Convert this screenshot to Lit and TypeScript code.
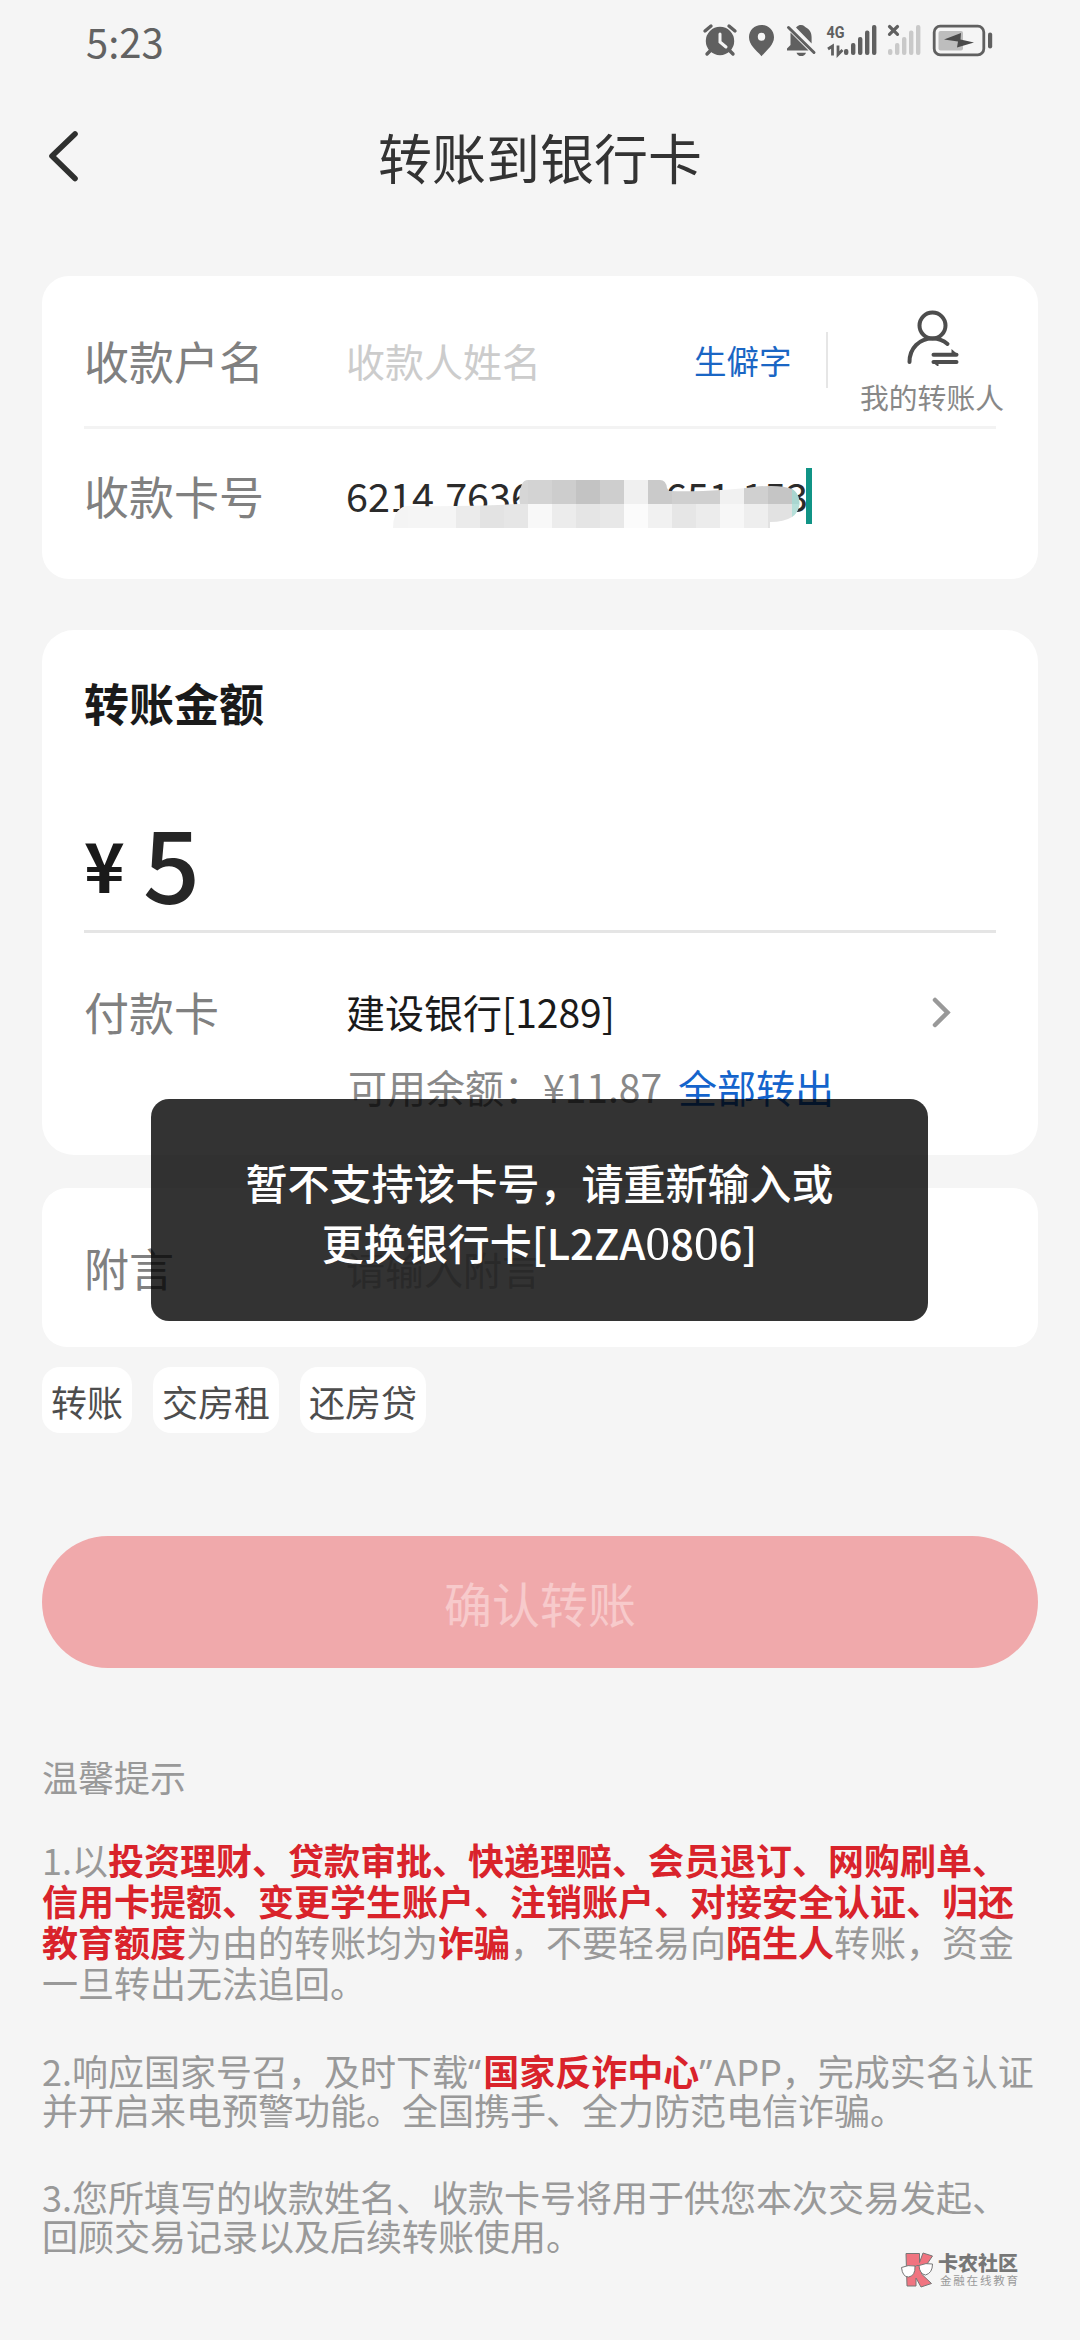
import { LitElement, html, svg, css } from "lit";
import { customElement, property } from "lit/decorators.js";

const CELL = 24;
const TOP_CELLS = ["#d6d6d6", "#d3d3d3", "#cdcdcd", "#c3c3c3", "#cecece", "#f0f0f0", "#cacaca", "#cfcfcf", "#cfcfcf", "#f1f1f1", "#d0d0d0", "#c5c5c5", "#a9d6d0"];
const BOTTOM_CELLS = ["#f4f4f4", "#f5f5f5", "#f5f5f5", "#ebebeb", "#e3e3e3", "#e6e6e6", "#f8f8f8", "#ececec", "#e5e5e5", "#e8e8e8", "#fbfbfb", "#f1f1f1", "#e6e6e6", "#ececec", "#f7f7f7", "#eeeeee", "#e2e2e2", "#b6dfd9"];

@customElement("status-bar")
class StatusBar extends LitElement {
  static styles = css`
    :host { display: flex; height: 82px; align-items: center; padding: 0 82px 0 86px; justify-content: space-between; }
    .time { font-size: 40px; line-height: 40px; color: #626262; }
    .icons { width: 300px; height: 82px; display: block; }
    .net { font: 700 17px "Roboto", "Liberation Sans", sans-serif; }
  `;
  render() {
    const bars = [6, 12, 18, 24.5, 30];
    return html`
      <span class="time">5:23</span>
      <svg class="icons" viewBox="698 0 300 82" fill="#606060">
        <circle cx="720" cy="41" r="14.2" />
        <path d="M705 31l6-5M735 31l-6-5M710 51l-3 3M730 51l3 3" stroke="#606060" stroke-width="3.4" stroke-linecap="round" />
        <path d="M720 34v8l6 5" fill="none" stroke="#f5f5f5" stroke-width="3" stroke-linecap="round" />
        <path fill-rule="evenodd" d="M761.500 25c-7.200 0-12.500 5.400-12.500 12.300 0 7.500 7 12.700 12.500 18.900 5.500-6.200 12.500-11.400 12.500-18.900C774 30.400 768.700 25 761.500 25zm0 7.800a3.700 4 0 1 1 0 8 3.700 4 0 1 1 0-8z" />
        <path d="M790.500 32.500L808.500 50.500h-21.500v-2l3.500-3.500zM796 27.500c1-.6 1.800-2.500 5-2.500 3 0 3.800 1.800 4.600 2.300 4.700 2.200 6 6.200 6 10.200v6zM796.500 52.700h9.500c-.8 2.200-2.500 3.400-4.700 3.400-2.300 0-4-1.200-4.800-3.400z" />
        <path d="M788.500 27.500l25.500 25" stroke="#606060" stroke-width="3" stroke-linecap="round" />
        <text class="net" x="826.500" y="38.300" textLength="18" lengthAdjust="spacingAndGlyphs">4G</text>
        <path d="M828 49l4.500-3v9.500M838 45.500v9l4.500-4.500" fill="none" stroke="#606060" stroke-width="2.800" />
        ${bars.map((h, i) => svg`<rect x=${844 + i * 7} y=${55 - h} width="4.400" height=${h} rx="2" />`)}
        <path d="M889.500 26.500l8 7.800M897.500 26.500l-8 7.800" stroke="#606060" stroke-width="3.200" stroke-linecap="round" />
        ${bars.map((h, i) => svg`<rect x=${888 + i * 7} y=${55 - h} width="4.400" height=${h} rx="2" fill="#c9c9c9" />`)}
        <rect x="934.200" y="26.200" width="49.600" height="28.600" rx="6" fill="none" stroke="#606060" stroke-width="2.800" />
        <rect x="938.500" y="31" width="24.500" height="19.500" rx="2" fill="#bdbdbd" />
        <path d="M944 39.500l17-6.500-.5 6.500 13.500 3-17 5 1-6z" fill="#4a4a4a" />
        <rect x="988" y="32.500" width="4.200" height="16" rx="2.100" />
      </svg>
    `;
  }
}

@customElement("account-card")
class AccountCard extends LitElement {
  static styles = css`
    :host { display: block; height: 303px; box-sizing: border-box; background: #fff; border-radius: 27px; padding: 0 42px; }
    .row { display: flex; align-items: center; box-sizing: border-box; }
    .name { height: 150px; padding-top: 18px; }
    .number { height: 132px; }
    .line { height: 3px; background: #f3f3f3; }
    .label { width: 262px; padding-top: 2px; font-size: 45px; line-height: 60px; color: #808080; flex: none; }
    .hint { width: 348px; font-size: 39px; line-height: 60px; color: #ccc; }
    .rare { font-size: 32.5px; line-height: 40px; color: #1a66c4; width: 132px; }
    .bar { width: 2px; height: 56px; background: #e6e6e6; }
    .contact { align-self: flex-start; padding-top: 16px; margin: 0 -12px 0 32px; display: flex; flex-direction: column; align-items: center; gap: 16px; font-size: 28.8px; line-height: 30px; color: #888; white-space: nowrap; }
    .person { width: 54px; height: 56px; display: block; }
    .value { position: relative; display: flex; align-items: center; width: 470px; height: 60px; font-size: 39.6px; line-height: 60px; color: #2b2b2b; word-spacing: 2.400px; white-space: pre; }
    .tail { margin-left: auto; margin-right: 8px; }
    .mosaic { position: absolute; left: 46px; top: 15px; width: 412px; height: 52px; }
    .caret { position: absolute; left: 460px; top: 3px; width: 6px; height: 56px; background: #109486; }
  `;
  render() {
    return html`
      <div class="row name">
        <span class="label">收款户名</span>
        <span class="hint">收款人姓名</span>
        <span class="rare">生僻字</span>
        <span class="bar"></span>
        <div class="contact">
          <svg class="person" viewBox="905.500 310 54 56" fill="none" stroke="#4d4d4d" stroke-width="4" stroke-linecap="round">
            <circle cx="933" cy="325.500" r="13" />
            <path d="M910 362c0-14 10-23.500 23-23.500 6 0 11 2 15 5.500" />
            <path d="M934 354.800h23M934 362h23" />
            <path d="M952 349l7 6h-7zM939 367l-7-5.500h7z" fill="#4d4d4d" stroke="none" />
          </svg>
          <span>我的转账人</span>
        </div>
      </div>
      <div class="line"></div>
      <div class="row number">
        <span class="label">收款卡号</span>
        <div class="value">
          <span>6214 7636</span><span class="tail">651 153</span>
          <svg class="mosaic" viewBox="392 480 412 52">
            <clipPath id="brush">
              <path d="M528 480H660q6 0 7 8l2 3c30 1 60-1 85-4q26-3 38 2c10 5 10 22 0 28q-8 5-22 5v6H393q0-20 14-22 60 1 113-2-2-12 2-20 2-4 6-4z" />
            </clipPath>
            <g clip-path="url(#brush)">
              ${TOP_CELLS.map((c, i) => svg`<rect x=${504 + i * CELL} y="480" width="24.500" height="24.500" fill=${c} />`)}
              ${BOTTOM_CELLS.map((c, i) => svg`<rect x=${384 + i * CELL} y="504" width="24.500" height="24" fill=${c} />`)}
            </g>
          </svg>
          <span class="caret"></span>
        </div>
      </div>
    `;
  }
}

@customElement("amount-card")
class AmountCard extends LitElement {
  static styles = css`
    :host { display: block; height: 525px; box-sizing: border-box; background: #fff; border-radius: 32px; padding: 43px 42px 0; }
    .title { font-size: 45px; line-height: 60px; font-weight: 700; color: #1a1a1a; }
    .amount { display: flex; align-items: center; box-sizing: border-box; height: 197px; padding-top: 58px; line-height: 100px; }
    .yen { font-size: 69px; font-weight: 700; color: #1a1a1a; margin-top: 5px; width: 59px; }
    .sum { font-size: 100px; font-weight: 500; color: #262626; }
    .line { height: 3px; background: #e5e5e5; }
    .pay { display: flex; align-items: center; margin-top: 48px; height: 60px; line-height: 60px; }
    .label { width: 262px; padding-top: 2px; font-size: 45px; color: #808080; }
    .bank { font-size: 39px; color: #1a1a1a; flex: 1; }
    .arrow { width: 20px; height: 32px; margin: 2px 44px 0 0; display: block; }
    .balance { margin: 15px 0 0 264px; font-size: 39px; line-height: 60px; color: #888; display: flex; gap: 16px; white-space: nowrap; }
    .all { color: #1464cc; }
  `;
  render() {
    return html`
      <div class="title">转账金额</div>
      <div class="amount"><span class="yen">¥</span><span class="sum">5</span></div>
      <div class="line"></div>
      <div class="pay">
        <span class="label">付款卡</span><span class="bank">建设银行[1289]</span>
        <svg class="arrow" viewBox="0 0 20 32" fill="none" stroke="#999" stroke-width="4.500" stroke-linecap="round"><path d="M3 4l12.500 12.500L3 29" /></svg>
      </div>
      <div class="balance"><span>可用余额：¥11.87</span><span class="all">全部转出</span></div>
    `;
  }
}

@customElement("safety-tips")
class SafetyTips extends LitElement {
  static styles = css`
    :host { display: block; font-size: 36px; color: #999; white-space: nowrap; }
    .head { line-height: 40px; }
    .tip { line-height: 41px; margin-top: 42.5px; }
    .tight { line-height: 39px; margin-top: 48px; }
    .hot { color: #d9232b; font-weight: 700; }
    .q { font-family: "Noto Sans", sans-serif; line-height: 0; letter-spacing: 2.2px; }
  `;
  render() {
    return html`
      <div class="head">温馨提示</div>
      <div class="tip">
        <div>1.以<b class="hot">投资理财、贷款审批、快递理赔、会员退订、网购刷单、</b></div>
        <div><b class="hot">信用卡提额、变更学生账户、注销账户、对接安全认证、归还</b></div>
        <div><b class="hot">教育额度</b>为由的转账均为<b class="hot">诈骗</b>，不要轻易向<b class="hot">陌生人</b>转账，资金</div>
        <div>一旦转出无法追回。</div>
      </div>
      <div class="tip tight">
        <div>2.响应国家号召，及时下载<span class="q">“</span><b class="hot">国家反诈中心</b><span class="q">”</span>APP，完成实名认证</div>
        <div>并开启来电预警功能。全国携手、全力防范电信诈骗。</div>
      </div>
      <div class="tip tight">
        <div>3.您所填写的收款姓名、收款卡号将用于供您本次交易发起、</div>
        <div>回顾交易记录以及后续转账使用。</div>
      </div>
    `;
  }
}

@customElement("app-root")
class AppRoot extends LitElement {
  @property({ attribute: false }) chips = ["转账", "交房租", "还房贷"];
  static styles = css`
    :host { display: block; position: relative; width: 1080px; height: 2340px; overflow: hidden; background: #f5f5f5; font-family: "Noto Sans CJK SC", sans-serif; }
    .nav { display: grid; grid-template-columns: 120px 1fr 120px; align-items: center; height: 146px; }
    .back { width: 40px; height: 60px; margin: 2px 0 0 44px; display: block; }
    .title { text-align: center; font-size: 54px; line-height: 70px; padding-top: 3px; color: #333; }
    .body { padding: 48px 42px 0; display: flex; flex-direction: column; }
    .amount { margin-top: 51px; }
    .memo { margin-top: 33px; height: 159px; box-sizing: border-box; padding: 0 42px; border-radius: 25px; background: #fff; display: flex; align-items: center; }
    .label { width: 262px; font-size: 45px; line-height: 60px; color: #808080; }
    .hint { font-size: 39px; line-height: 60px; color: #ccc; }
    .chips { display: flex; gap: 21px; margin-top: 20px; }
    .chip { height: 66px; line-height: 68px; padding: 0 9px; border-radius: 18px; background: #fff; font-size: 36px; color: #4d4d4d; }
    .submit { margin-top: 103px; height: 132px; border: 0; border-radius: 66px; background: #f0a9ab; color: #f7cacb; font-family: inherit; font-size: 48px; line-height: 132px; padding: 0; }
    .tips { margin-top: 88px; }
    .toast { position: absolute; left: 151px; top: 1099px; width: 777px; height: 222px; box-sizing: border-box; padding-top: 53px; border-radius: 18px; background: rgba(0, 0, 0, 0.8); color: #fff; font-size: 42px; font-weight: 500; line-height: 60px; text-align: center; white-space: nowrap; }
    .zero { font-family: "Liberation Serif", serif; font-size: 49px; font-weight: 400; line-height: 40px; }
    .mark { position: absolute; left: 900px; top: 2252px; display: flex; gap: 3px; }
    .logo { width: 35px; height: 36px; display: block; }
    .brand { font-size: 20px; font-weight: 900; line-height: 21px; color: #777; white-space: nowrap; }
    .motto { font-size: 11.5px; line-height: 15px; letter-spacing: 1.800px; color: #999; padding-left: 2px; white-space: nowrap; }
  `;
  render() {
    return html`
      <status-bar></status-bar>
      <div class="nav">
        <svg class="back" viewBox="44 126 40 60" fill="none" stroke="#2f302f" stroke-width="5.600" stroke-linecap="round" stroke-linejoin="round"><path d="M75 134L52 156l23 22.500" /></svg>
        <div class="title">转账到银行卡</div>
      </div>
      <div class="body">
        <account-card></account-card>
        <amount-card class="amount"></amount-card>
        <div class="memo"><span class="label">附言</span><span class="hint">请输入附言</span></div>
        <div class="chips">${this.chips.map((c) => html`<span class="chip">${c}</span>`)}</div>
        <button class="submit">确认转账</button>
        <safety-tips class="tips"></safety-tips>
      </div>
      <div class="toast">
        <div>暂不支持该卡号，请重新输入或</div>
        <div>更换银行卡[L2ZA<span class="zero">0</span>8<span class="zero">0</span>6]</div>
      </div>
      <div class="mark">
        <svg class="logo" viewBox="0 0 35 36" stroke="#777" stroke-width="1">
          <path d="M6 1.500h13.500v9L23 1l9.500 3-7.500 11-3.500 7 10 9.500L21 35l-5-9v8H7z" fill="#f07480" />
          <path d="M1.500 15.500q6.500-3 13.500-1.500 .5 10-6.500 11-6 0-7-9.500zM19 13.500q7-3 13.500-1.500 0 9-7 11-6-1-6.500-9.500zM15 14.500q2-1.500 4-1" fill="#fff" />
        </svg>
        <div><div class="brand">卡农社区</div><div class="motto">金融在线教育</div></div>
      </div>
    `;
  }
}
